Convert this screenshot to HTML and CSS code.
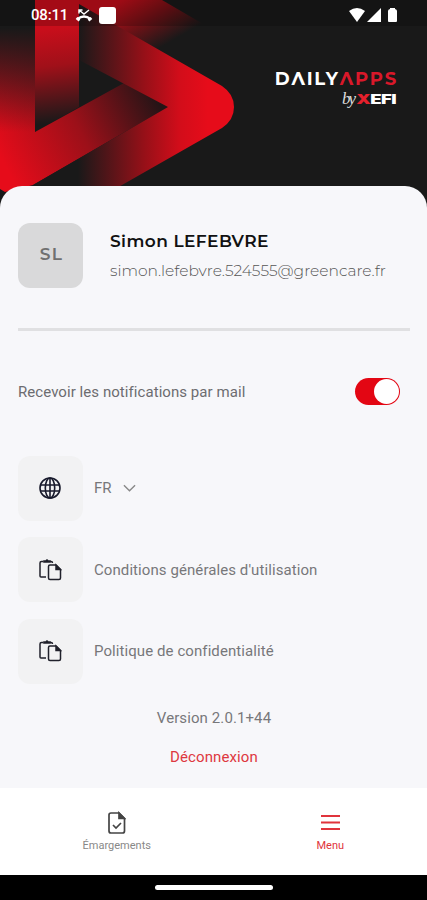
FILE: index.html
```html
<!DOCTYPE html>
<html lang="fr">

<head>
    <meta charset="UTF-8">
    <meta name="viewport" content="width=device-width, initial-scale=1.0">
    <title>DailyApps - Menu</title>
    <link rel="stylesheet" href="styles.css">
</head>

<body>
    <div class="app">
        <header class="header">
            <svg class="header-art" width="427" height="220" viewBox="0 0 427 220">
                <defs>
                    <linearGradient id="shade" gradientUnits="userSpaceOnUse" x1="0" y1="28" x2="0" y2="132">
                        <stop offset="0" stop-color="#191919" />
                        <stop offset="1" stop-color="#191919" stop-opacity="0" />
                    </linearGradient>
                    <linearGradient id="bar" gradientUnits="userSpaceOnUse" x1="50" y1="28" x2="62" y2="122">
                        <stop offset="0" stop-color="#c90e1b" />
                        <stop offset=".4" stop-color="#a01019" />
                        <stop offset="1" stop-color="#191919" />
                    </linearGradient>
                    <linearGradient id="lower" gradientUnits="userSpaceOnUse" x1="10" y1="175" x2="156" y2="98">
                        <stop offset="0" stop-color="#e60c1a" />
                        <stop offset=".5" stop-color="#9c1019" />
                        <stop offset="1" stop-color="#251416" />
                    </linearGradient>
                    <linearGradient id="arrow" gradientUnits="userSpaceOnUse" x1="78" y1="0" x2="208" y2="0">
                        <stop offset="0" stop-color="#191919" />
                        <stop offset=".5" stop-color="#941018" />
                        <stop offset=".78" stop-color="#d20d1a" />
                        <stop offset="1" stop-color="#e60c1a" />
                    </linearGradient>
                    <linearGradient id="top" gradientUnits="userSpaceOnUse" x1="128" y1="-3" x2="158" y2="49">
                        <stop offset="0" stop-color="#c00e1a" />
                        <stop offset=".5" stop-color="#701116" />
                        <stop offset="1" stop-color="#191919" />
                    </linearGradient>
                </defs>
                <path fill="url(#top)" d="M79 0h83l48 28-30 34-101-48z" />
                <path fill="url(#bar)" d="M35 0h44v107l-44 25z" />
                <path fill="url(#lower)" d="M0 0h35v132l89-49 44 24L33 185 5 192l-5-3z" />
                <path fill="url(#shade)" d="M0 0h35v132H0z" />
                <path fill="url(#arrow)" d="M79 4l143 82q12 8 12 21t-12 21L122 185 90 204H33v-19l135-78-89-47z" />
            </svg>
            <div class="status-bar">
                <span class="time">08:11</span>
                <svg width="18" height="16" viewBox="0 0 18 16" fill="none" stroke="#fff">
                    <path d="M4 3l5 4 5-4M4 6.500V3h3.500" stroke-width="1.500" />
                    <path d="M2.500 12c4-3 9-3 13 0" stroke-width="2.500" />
                    <path d="M1.500 11l3 2.500M16.500 11l-3 2.500" stroke-width="2.500" />
                </svg>
                <span class="status-square"></span>
                <svg class="status-right" width="50" height="16" viewBox="0 0 50 16" fill="#fff">
                    <path d="M0 4q8-6 16 0L8 15z" />
                    <path d="M32 1v14H18z" />
                    <path d="M39 4q0-1.500 2-2V1h5v1q2 .5 2 2v10q0 1-1 1h-7q-1 0-1-1z" />
                </svg>
            </div>
            <div class="logo">
                <div class="logo-name">DΛILY<span>ΛPPS</span></div>
                <div class="logo-by">
                    <em>by</em>
                    <span class="xefi"><b>X</b>EFI</span>
                </div>
            </div>
        </header>

        <main class="content">
            <section class="profile">
                <div class="avatar">SL</div>
                <div>
                    <div class="name">Simon LEFEBVRE</div>
                    <div class="email">simon.lefebvre.524555@greencare.fr</div>
                </div>
            </section>

            <div class="notifications">
                <span>Recevoir les notifications par mail</span>
                <span class="switch"></span>
            </div>

            <div class="options">
                <div class="option">
                    <div class="option-icon">
                        <svg width="24" height="24" viewBox="0 0 24 24" fill="none" stroke="#181a2c" stroke-width="1.6">
                            <circle cx="12" cy="12" r="10" />
                            <ellipse cx="12" cy="12" rx="4.700" ry="10" />
                            <path d="M12 2v20M2.500 9h19M2.500 15h19" />
                        </svg>
                    </div>
                    <span>FR</span>
                    <svg width="13" height="10" viewBox="0 0 14 10" fill="none" stroke="#888" stroke-width="1.5">
                        <path d="M1 2l6 6 6-6" />
                    </svg>
                </div>
                <div class="option">
                    <div class="option-icon">
                        <svg width="24" height="24" viewBox="0 0 24 24" fill="none" stroke="#20212b" stroke-width="1.500">
                            <path d="M8 19H3q-1 0-1-1V5q0-1.500 1.500-1.500h2M12 3.500h1q1.500 0 1.500 1.500" />
                            <path d="M6 4V3h2q1-2 2 0h2v1z" fill="#20212b" />
                            <path d="M12 7h6l4.500 4.500V20q0 1.500-1.500 1.500h-9q-1.500 0-1.500-1.500V8.500Q10.500 7 12 7z" />
                            <path d="M18 7v4.500h4.500z" fill="#20212b" />
                        </svg>
                    </div>
                    <span>Conditions générales d'utilisation</span>
                </div>
                <div class="option">
                    <div class="option-icon">
                        <svg width="24" height="24" viewBox="0 0 24 24" fill="none" stroke="#20212b" stroke-width="1.500">
                            <path d="M8 19H3q-1 0-1-1V5q0-1.500 1.500-1.500h2M12 3.500h1q1.500 0 1.500 1.500" />
                            <path d="M6 4V3h2q1-2 2 0h2v1z" fill="#20212b" />
                            <path d="M12 7h6l4.500 4.500V20q0 1.500-1.500 1.500h-9q-1.500 0-1.500-1.500V8.500Q10.500 7 12 7z" />
                            <path d="M18 7v4.500h4.500z" fill="#20212b" />
                        </svg>
                    </div>
                    <span>Politique de confidentialité</span>
                </div>
            </div>

            <div class="version">Version 2.0.1+44</div>
            <div class="logout">Déconnexion</div>
        </main>

        <nav class="tabs">
            <div class="tab">
                <svg width="18" height="24" viewBox="0 0 18 24" fill="none" stroke="#444" stroke-width="1.700">
                    <path d="M3 2h8l5.500 5.500V20q0 2-2 2H3q-2 0-2-2V4q0-2 2-2z" />
                    <path d="M11 2v5.500h5.500z" fill="#444" />
                    <path d="M5 14l3 3 5-5" />
                </svg>
                <span>Émargements</span>
            </div>
            <div class="tab active">
                <svg width="20" height="24" viewBox="0 0 20 24" stroke="#e0343c" stroke-width="2">
                    <path d="M1 5h19M1 11.500h19M1 18h19" />
                </svg>
                <span>Menu</span>
            </div>
        </nav>
        <div class="system-bar"><span></span></div>
    </div>
</body>

</html>
```

FILE: styles.css
```css
* {
    box-sizing: border-box;
}

body {
    margin: 0;
    font-family: Roboto, sans-serif;
    font-size: 15px;
    color: #77777a;
}

.app {
    height: 900px;
    display: flex;
    flex-direction: column;
    overflow: hidden;
    background: #191919;
}

.header {
    height: 186px;
    flex: none;
    position: relative;
}

.header-art {
    position: absolute;
    top: 0;
    left: 0;
}

.status-bar {
    position: relative;
    height: 26px;
    padding: 4px 28px 0 31px;
    display: flex;
    align-items: center;
    background: rgba(0, 0, 0, 0.18);
}

.time {
    width: 44px;
    font-size: 15px;
    font-weight: 500;
    letter-spacing: -0.2px;
    color: #fff;
}

.status-square {
    width: 17px;
    height: 17px;
    margin-left: 6px;
    border-radius: 3px;
    background: #fff;
}

.status-right {
    margin-left: auto;
}

.logo {
    position: relative;
    display: flex;
    flex-direction: column;
    align-items: flex-end;
    padding: 43px 31px 0 0;
    color: #fff;
}

.logo-name {
    font-family: Montserrat, Inter, sans-serif;
    font-size: 18px;
    font-weight: 700;
    line-height: 20px;
    letter-spacing: 1.8px;
    margin-right: -2px;
}

.logo-name span {
    color: #d9182a;
}

.logo-by {
    display: flex;
    align-items: center;
    height: 20px;
}

.logo-by em {
    font-family: "Liberation Serif", serif;
    font-size: 17px;
    line-height: 18px;
    letter-spacing: -2px;
    color: #ddd;
    margin-right: 14px;
}

.xefi {
    font-family: Inter, sans-serif;
    font-size: 13px;
    font-weight: 900;
    line-height: 14px;
    letter-spacing: -0.4px;
    transform: scaleX(1.42);
    transform-origin: right;
}

.xefi b {
    color: #e5202c;
    font-weight: 900;
}

.content {
    position: relative;
    flex: 1;
    padding: 37px 17px 0 18px;
    border-radius: 22px 22px 0 0;
    background: #f7f7fa;
}

.profile {
    height: 108px;
    display: flex;
    align-items: flex-start;
    gap: 27px;
    border-bottom: 3px solid #e0e0e2;
    font-family: Montserrat, Inter, sans-serif;
}

.avatar {
    width: 65px;
    height: 65px;
    display: flex;
    align-items: center;
    justify-content: center;
    padding: 0 0 3px 2px;
    border-radius: 12px;
    background: #d9d9da;
    color: #707070;
    font-size: 17px;
    font-weight: 600;
    letter-spacing: 1.3px;
}

.name {
    margin-top: 7px;
    font-size: 17px;
    font-weight: 600;
    line-height: 22px;
    letter-spacing: 0.43px;
    color: #111;
    white-space: nowrap;
}

.email {
    margin-top: 8px;
    font-size: 15.5px;
    font-weight: 300;
    line-height: 22px;
    letter-spacing: -0.02px;
    color: #555;
    white-space: nowrap;
}

.notifications {
    height: 121px;
    margin-bottom: 4px;
    padding-right: 10px;
    display: flex;
    align-items: center;
    justify-content: space-between;
    letter-spacing: 0.06px;
    color: #6c6c70;
}

.switch {
    width: 45px;
    height: 27px;
    display: flex;
    justify-content: flex-end;
    padding: 1px;
    border-radius: 14px;
    background: #e30613;
}

.switch::after {
    content: "";
    width: 25px;
    height: 25px;
    border-radius: 50%;
    background: #fff;
}

.options {
    display: flex;
    flex-direction: column;
    gap: 17px;
    letter-spacing: 0.08px;
}

.option {
    height: 64.5px;
    display: flex;
    align-items: center;
    gap: 11px;
}

.option-icon {
    width: 65px;
    height: 65px;
    display: flex;
    align-items: center;
    justify-content: center;
    padding-right: 1px;
    border-radius: 12px;
    background: #f2f2f3;
}

.version,
.logout {
    text-align: center;
    letter-spacing: 0.1px;
}

.version {
    margin-top: 25px;
    line-height: 18px;
}

.logout {
    margin-top: 21px;
    line-height: 18px;
    color: #de3840;
}

.tabs {
    height: 87px;
    flex: none;
    display: flex;
    background: #fff;
}

.tab {
    flex: 1;
    display: flex;
    flex-direction: column;
    align-items: center;
    padding-top: 23px;
    padding-left: 20px;
    font-size: 11px;
    color: #888;
}

.tab.active {
    color: #e0343c;
}

.tab span {
    margin-top: 4px;
}

.system-bar {
    height: 25px;
    flex: none;
    display: flex;
    align-items: center;
    justify-content: center;
    background: #000;
}

.system-bar span {
    width: 118px;
    height: 5px;
    border-radius: 3px;
    background: #fff;
}
```
